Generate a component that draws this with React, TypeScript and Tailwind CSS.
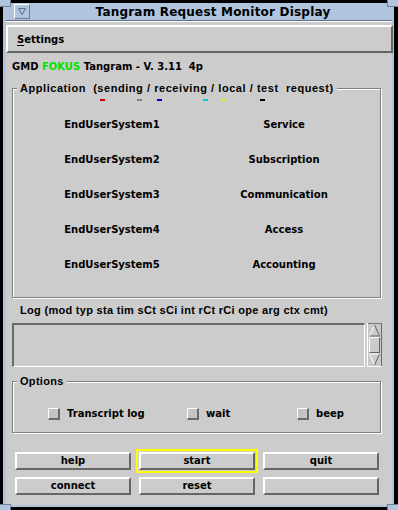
import React from "react";

function Bevel({ label, ring }: { label: string; ring?: boolean }) {
  return (
    <div
      className={
        "h-[18px] w-[116px] flex items-center justify-center border-t-2 border-l-2 border-b-2 border-r-2 border-t-white border-l-white border-b-[#666666] border-r-[#666666] bg-[#cccccc] text-[10px] leading-none " +
        (ring ? "outline-2 outline-offset-[1px] outline-[#ffff00]" : "")
      }
    >
      {label}
    </div>
  );
}

function Check({ label, width }: { label: string; width: string }) {
  return (
    <div className={"flex items-center gap-[7px] " + width}>
      <div className="w-[12px] h-[12px] border-t border-l border-t-white border-l-white border-b-2 border-r-2 border-b-[#6a6a6a] border-r-[#6a6a6a] bg-[#c4c4c4]" />
      <span className="text-[10px] leading-none">{label}</span>
    </div>
  );
}

function ScrollBar() {
  return (
    <svg width="15" height="44" viewBox="0 0 15 44" className="shrink-0">
      <rect x="0" y="0" width="15" height="44" fill="#c8c8c8" />
      <line x1="0" y1="0.5" x2="15" y2="0.5" stroke="#7a7a7a" />
      <line x1="0.5" y1="0" x2="0.5" y2="44" stroke="#ffffff" />
      <line x1="14.5" y1="0" x2="14.5" y2="44" stroke="#6a6a6a" />
      <line x1="0" y1="43.5" x2="15" y2="43.5" stroke="#ffffff" />
      {/* up arrow */}
      <polygon points="7.5,2 2.5,13 12.5,13" fill="#cccccc" />
      <line x1="7.5" y1="2" x2="2.5" y2="13" stroke="#ffffff" />
      <line x1="7.5" y1="2" x2="12.5" y2="13" stroke="#666666" />
      <line x1="2.5" y1="13" x2="12.5" y2="13" stroke="#666666" />
      {/* thumb */}
      <rect x="2.5" y="14.5" width="10" height="15" fill="#cccccc" stroke="#666666" />
      <line x1="2.5" y1="14.5" x2="2.5" y2="29.5" stroke="#ffffff" />
      <line x1="2.5" y1="14.5" x2="12.5" y2="14.5" stroke="#ffffff" />
      {/* down arrow */}
      <polygon points="2.5,31 12.5,31 7.5,42" fill="#cccccc" />
      <line x1="2.5" y1="31" x2="12.5" y2="31" stroke="#ffffff" />
      <line x1="2.5" y1="31" x2="7.5" y2="42" stroke="#ffffff" />
      <line x1="12.5" y1="31" x2="7.5" y2="42" stroke="#666666" />
    </svg>
  );
}

export default function App() {
  const systems = ["EndUserSystem1", "EndUserSystem2", "EndUserSystem3", "EndUserSystem4", "EndUserSystem5"];
  const services = ["Service", "Subscription", "Communication", "Access", "Accounting"];

  return (
    <div className="relative w-[398px] h-[510px] bg-black overflow-hidden font-['DejaVu_Sans',sans-serif] font-bold text-black">
      {/* frame corners */}
      <div className="absolute left-0 top-0 w-[11px] h-[7px] bg-[#b0c4de] border-r border-b border-[#6f7f96]" />
      <div className="absolute right-0 top-0 w-[11px] h-[7px] bg-[#b0c4de] border-l border-b border-[#6f7f96]" />
      <div className="absolute left-0 bottom-0 w-[11px] h-[6px] bg-[#b0c4de] border-r border-t border-[#6f7f96]" />
      <div className="absolute right-0 bottom-0 w-[11px] h-[6px] bg-[#b0c4de] border-l border-t border-[#6f7f96]" />

      {/* window */}
      <div className="ml-[3px] mt-[3px] w-[391px] h-[504px] flex flex-col border-l-[3px] border-r-[2px] border-b-[2px] border-[#b0c4de] bg-[#cccccc]">
        {/* title bar */}
        <div className="h-[18px] shrink-0 flex items-center bg-[#b0c4de] border-b border-[#5f6f86]">
          <div className="ml-[8px] w-[16px] h-[15px] flex items-center justify-center border-t border-l border-white border-b border-r border-b-[#6f7f96] border-r-[#6f7f96]">
            <svg width="8" height="7" viewBox="0 0 8 7">
              <polygon points="0.5,0.5 7.5,0.5 4,6.5" fill="none" stroke="#5f6f86" />
            </svg>
          </div>
          <div className="flex-1 text-center text-[12px] tracking-[0.2px] leading-none pl-[4px]">
            Tangram Request Monitor Display
          </div>
        </div>
        <div className="h-[1px] shrink-0 bg-white" />

        {/* menu bar */}
        <div className="mt-[3px] h-[28px] shrink-0 flex items-center border-t-2 border-l-2 border-b-2 border-r-2 border-t-white border-l-white border-b-[#666666] border-r-[#666666] text-[10px] pl-[9px] mr-[-1px]">
          <span>
            <span className="underline underline-offset-2">S</span>ettings
          </span>
        </div>

        <div className="pl-[6px] w-[377px] flex flex-col">
          <div className="mt-[7px] h-[14px] flex items-center text-[10px] leading-none">
            GMD&nbsp;<span className="text-[#00e000]">FOKUS</span>&nbsp;Tangram - V. 3.11&nbsp;&nbsp;4p
          </div>

          {/* application group */}
          <fieldset className="mt-[8px] w-[369px] border border-[#808080] shadow-[inset_1px_1px_0_#ffffff,1px_1px_0_#ffffff]">
            <legend className="ml-[4px] px-[3px] bg-[#cccccc] text-[11px] tracking-[0.55px] leading-[13px] font-['Liberation_Sans',sans-serif]">
              Application&nbsp; (sending / receiving / local / test&nbsp; request)
            </legend>
            <div className="mt-[4px] h-[2px] flex">
              <div className="ml-[87px] w-[5px] bg-[#cc0000]" />
              <div className="ml-[32px] w-[5px] bg-[#808080]" />
              <div className="ml-[15px] w-[5px] bg-[#0000cc]" />
              <div className="ml-[41px] w-[5px] bg-[#00cccc]" />
              <div className="ml-[13px] w-[5px] bg-[#eeee00]" />
              <div className="ml-[34px] w-[5px] bg-[#000000]" />
            </div>
            <div className="mt-[6px] mb-[15px] grid grid-cols-[198px_146px] auto-rows-[35px] text-[10px]">
              {systems.map((s, i) => (
                <React.Fragment key={s}>
                  <div className="flex items-center justify-center">{s}</div>
                  <div className="flex items-center justify-center">{services[i]}</div>
                </React.Fragment>
              ))}
            </div>
          </fieldset>

          <div className="mt-[5px] h-[14px] pl-[8px] flex items-center text-[11px] tracking-[0.3px] leading-none font-['Liberation_Sans',sans-serif]">
            Log (mod typ sta tim sCt sCi int rCt rCi ope arg ctx cmt)
          </div>

          <div className="mt-[6px] flex gap-[2px]">
            <div className="w-[353px] h-[44px] border-t-2 border-l-2 border-b border-r border-t-[#6a6a6a] border-l-[#6a6a6a] border-b-white border-r-white" />
            <ScrollBar />
          </div>

          {/* options group */}
          <fieldset className="mt-[8px] w-[369px] h-[58px] border border-[#808080] shadow-[inset_1px_1px_0_#ffffff,1px_1px_0_#ffffff]">
            <legend className="ml-[4px] px-[3px] bg-[#cccccc] text-[11px] tracking-[0.3px] leading-[13px] font-['Liberation_Sans',sans-serif]">
              Options
            </legend>
            <div className="mt-[20px] pl-[35px] flex items-center">
              <Check label="Transcript log" width="w-[139px]" />
              <Check label="wait" width="w-[110px]" />
              <Check label="beep" width="w-[80px]" />
            </div>
          </fieldset>

          {/* buttons */}
          <div className="mt-[19px] pl-[3px] grid grid-cols-[116px_116px_116px] gap-x-[8px] gap-y-[7px]">
            <Bevel label="help" />
            <Bevel label="start" ring />
            <Bevel label="quit" />
            <Bevel label="connect" />
            <Bevel label="reset" />
            <Bevel label="" />
          </div>
        </div>
      </div>
    </div>
  );
}
